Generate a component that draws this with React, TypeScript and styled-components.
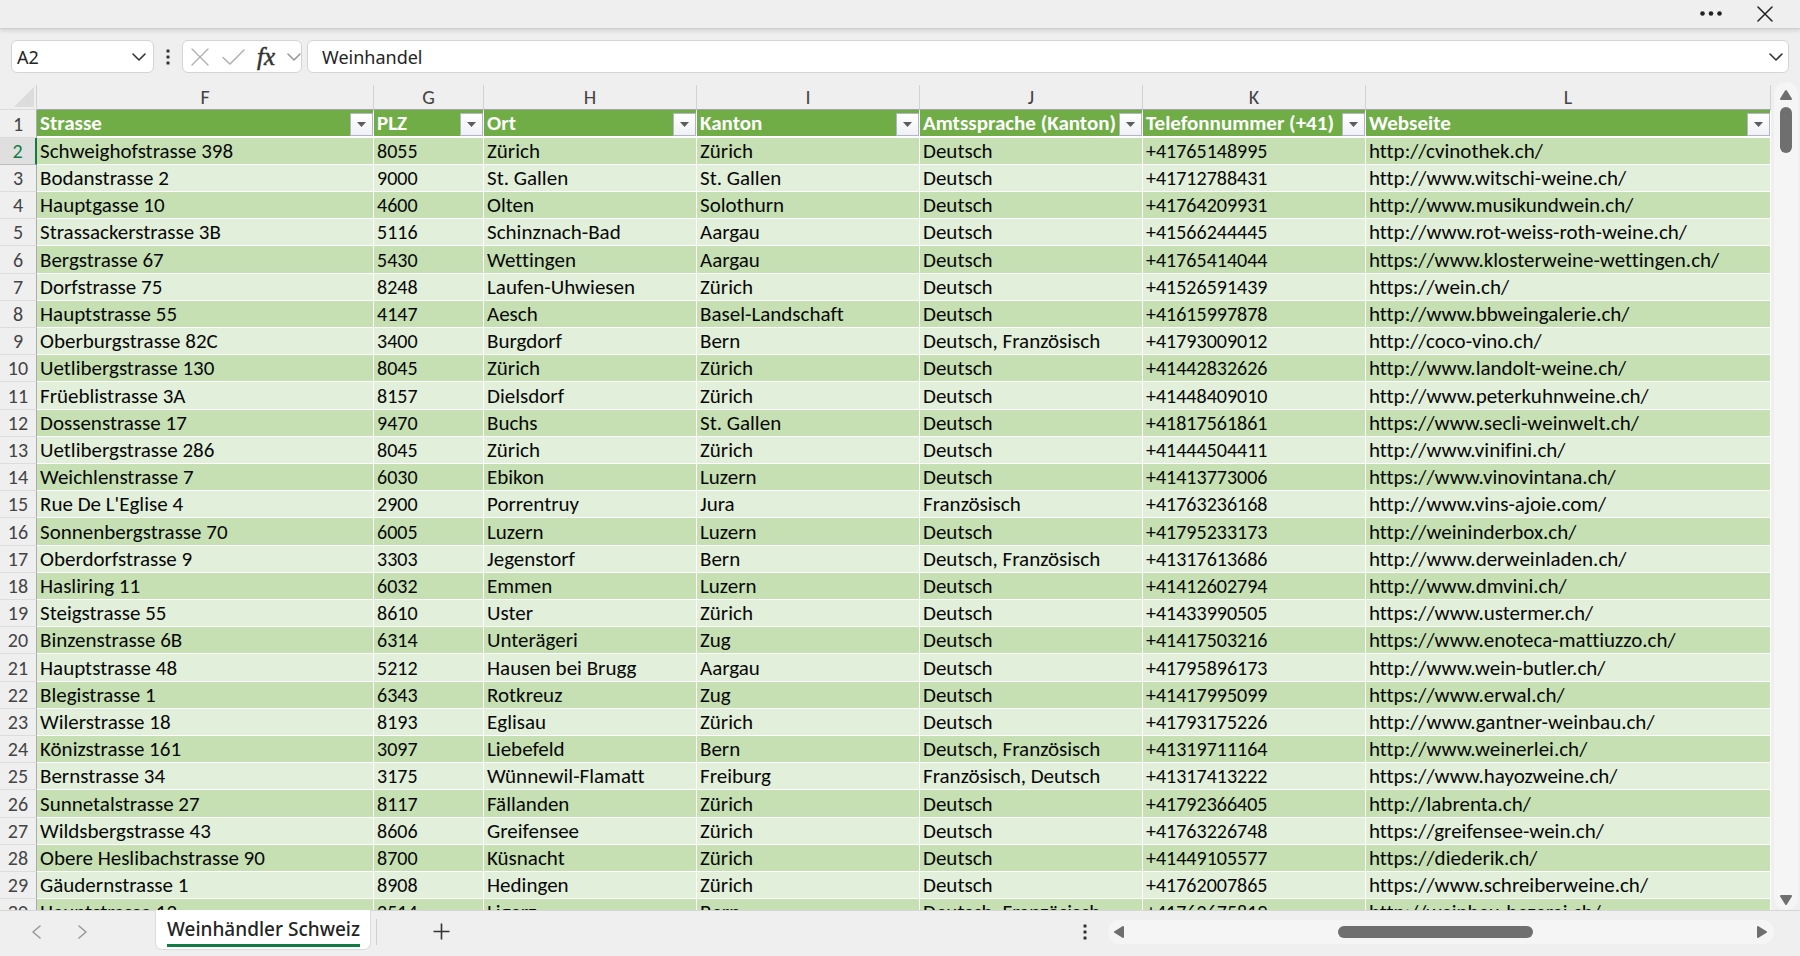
import React from "react";
import styled, { createGlobalStyle, css } from "styled-components";

const GlobalStyle = createGlobalStyle`
  * { box-sizing: border-box; }
  body { margin: 0; background: #efefef; }
  button { border: 0; padding: 0; background: none; font: inherit; color: inherit; }
`;

const uiFont = '"Noto Sans", "Open Sans", sans-serif';
const cellFont = 'Carlito, Lato, sans-serif';

const Window = styled.div`
  display: flex;
  flex-direction: column;
  height: 100vh;
  overflow: hidden;
  background: #efefef;
  font-family: ${uiFont};
  color: #242424;
`;

const TitleBar = styled.header`
  display: flex;
  flex: none;
  justify-content: flex-end;
  align-items: center;
  gap: 34px;
  height: 29px;
  padding-right: 26px;
  border-bottom: 1px solid #cfcfcf;
  box-shadow: 0 1px 5px rgba(0, 0, 0, 0.16);
`;

const IconButton = styled.button<{ $color?: string }>`
  display: flex;
  flex: none;
  align-items: center;
  justify-content: center;
  color: ${(p) => p.$color ?? "#333"};
  svg { display: block; }
`;

const FormulaBar = styled.div`
  display: flex;
  flex: none;
  align-items: center;
  gap: 5px;
  padding: 11px 11px 12px;
`;

const Field = styled.div<{ $width?: number }>`
  display: flex;
  flex: ${(p) => (p.$width ? "none" : "1")};
  width: ${(p) => (p.$width ? `${p.$width}px` : "auto")};
  height: 33px;
  align-items: center;
  border: 1px solid #d4d4d4;
  border-radius: 6px;
  background: #fff;
`;

const TextInput = styled.input<{ $indent: number }>`
  flex: 1;
  min-width: 0;
  height: 28px;
  padding: 0 0 0 ${(p) => p.$indent}px;
  border: 0;
  outline: 0;
  background: transparent;
  color: #242424;
  font-family: ${uiFont};
  font-size: 18px;
`;

const NameField = styled(Field)`padding-right: 7px;`;
const ToolsField = styled(Field)`
  gap: 12px;
  padding: 0 2px 0 8px;
`;
const ValueField = styled(Field)`padding-right: 5px;`;

const FxButton = styled(IconButton)`
  flex: 1;
  font-family: "Liberation Serif", serif;
  font-size: 25px;
  font-style: italic;
  line-height: 28px;
  -webkit-text-stroke: 0.5px currentColor;
`;

const SheetArea = styled.main`
  display: flex;
  flex: 1;
  min-height: 0;
`;

const GridView = styled.div`
  flex: 1;
  min-width: 0;
  overflow: hidden;
`;

const Grid = styled.table`
  width: 100%;
  table-layout: fixed;
  border-collapse: separate;
  border-spacing: 0;
  font-family: ${cellFont};
  font-size: 20px;
  font-variant-ligatures: none;
  line-height: 24px;
  color: #080808;
`;

const Column = styled.col<{ $width?: number }>`
  width: ${(p) => (p.$width ? `${p.$width}px` : "auto")};
`;

const ColumnLetter = styled.th`
  height: 25px;
  padding: 0;
  border-right: 1px solid #d2d2d2;
  border-bottom: 1px solid #a3a3b0;
  color: #444;
  font-weight: 400;
  line-height: 22px;
`;

const Corner = styled(ColumnLetter)`
  border-bottom-color: #dadada;
  svg { display: block; margin-left: auto; margin-right: 2px; }
`;

const RowNumber = styled.th<{ $active?: boolean }>`
  padding: 0;
  border-right: 1px solid #ababab;
  border-bottom: 1px solid #dcdcdc;
  color: #444;
  font-weight: 400;
  ${(p) => p.$active && css`
    border-right: 2px solid #107c41;
    border-bottom-color: #bdbdbd;
    background: #dfdfdf;
    color: #107c41;
  `}
`;

const HeadCell = styled.th`
  height: 28px;
  padding: 0;
  border-right: 1px solid #fff;
  border-bottom: 2px solid #fff;
  background: #70ad47;
  color: #fff;
  font-size: 21px;
  text-align: left;
`;

const HeadContent = styled.div`
  display: flex;
  align-items: center;
  justify-content: space-between;
  height: 26px;
  padding-left: 3px;
  white-space: nowrap;
`;

const FilterButton = styled(IconButton)`
  align-self: flex-end;
  width: 23px;
  height: 23px;
  border: 1px solid #b4b4c4;
  background: linear-gradient(#fff, #f0f1f6);
`;

const BodyRow = styled.tr`
  height: 27px;
  background: #e2efda;
  &:nth-child(odd) { background: #c6e0b4; }
  &:nth-child(5n) { height: 28px; }
`;

const Cell = styled.td<{ $numeric: boolean }>`
  padding: 0 0 0 3px;
  border-right: 1px solid #fff;
  border-bottom: 1px solid #fff;
  font-size: ${(p) => (p.$numeric ? 20 : 21)}px;
  white-space: nowrap;
  overflow: hidden;
`;

const BodyNumber = styled(RowNumber)`
  background: ${(p) => (p.$active ? "#dfdfdf" : "#efefef")};
`;

const VerticalScroll = styled.div`
  display: flex;
  flex: none;
  flex-direction: column;
  align-items: center;
  width: 24px;
  margin: -3px 2px 0 3px;
  padding: 7px 0 4px;
  border-radius: 12px;
  background: #f5f5f5;
`;

const VerticalThumb = styled.div`
  width: 12px;
  height: 46px;
  margin-top: 6px;
  margin-bottom: auto;
  border-radius: 6px;
  background: #6f6f6f;
`;

const BottomBar = styled.footer`
  display: flex;
  flex: none;
  height: 46px;
  border-top: 1px solid #d6d6d6;
  background: #efefef;
`;

const TabArrows = styled.div`
  display: flex;
  align-items: center;
  gap: 36px;
  width: 155px;
  padding: 0 0 4px 32px;
`;

const SheetTab = styled.button`
  height: 40px;
  margin-top: -1px;
  padding: 3px 10px 0 11px;
  border: solid #dcdcdc;
  border-width: 0 1px 1px;
  border-radius: 0 0 7px 7px;
  background: #fff;
  font-size: 19px;
  font-weight: 500;
  line-height: 28px;
`;

const TabLabel = styled.span`
  display: block;
  padding-bottom: 1px;
  border-bottom: 3px solid #107c41;
`;

const TabDivider = styled.div`
  width: 1px;
  height: 26px;
  margin: 8px 0 0 5px;
  background: #cfcfcf;
`;

const AddTab = styled(IconButton)`
  margin: 0 auto 4px 56px;
`;

const HorizontalArea = styled.div`
  display: flex;
  align-items: center;
  gap: 21px;
  width: 40%;
  padding: 0 26px 4px 3px;
`;

const HorizontalScroll = styled.div`
  display: flex;
  flex: 1;
  align-items: center;
  height: 24px;
  padding: 0 6px 0 5px;
  border-radius: 12px;
  background: #f5f5f5;
`;

const HorizontalThumb = styled.div`
  width: 195px;
  height: 12px;
  margin: 0 34% 0 auto;
  border-radius: 6px;
  background: #6f6f6f;
`;

const columns = [
  { letter: "F", title: "Strasse", width: 337 },
  { letter: "G", title: "PLZ", width: 110, numeric: true },
  { letter: "H", title: "Ort", width: 213 },
  { letter: "I", title: "Kanton", width: 223 },
  { letter: "J", title: "Amtssprache (Kanton)", width: 223 },
  { letter: "K", title: "Telefonnummer (+41)", width: 223, numeric: true },
  { letter: "L", title: "Webseite" },
];

const D = "Deutsch";
const DF = "Deutsch, Französisch";

const rows = [
  ["Schweighofstrasse 398", "8055", "Zürich", "Zürich", D, "+41765148995", "http://cvinothek.ch/"],
  ["Bodanstrasse 2", "9000", "St. Gallen", "St. Gallen", D, "+41712788431", "http://www.witschi-weine.ch/"],
  ["Hauptgasse 10", "4600", "Olten", "Solothurn", D, "+41764209931", "http://www.musikundwein.ch/"],
  ["Strassackerstrasse 3B", "5116", "Schinznach-Bad", "Aargau", D, "+41566244445", "http://www.rot-weiss-roth-weine.ch/"],
  ["Bergstrasse 67", "5430", "Wettingen", "Aargau", D, "+41765414044", "https://www.klosterweine-wettingen.ch/"],
  ["Dorfstrasse 75", "8248", "Laufen-Uhwiesen", "Zürich", D, "+41526591439", "https://wein.ch/"],
  ["Hauptstrasse 55", "4147", "Aesch", "Basel-Landschaft", D, "+41615997878", "http://www.bbweingalerie.ch/"],
  ["Oberburgstrasse 82C", "3400", "Burgdorf", "Bern", DF, "+41793009012", "http://coco-vino.ch/"],
  ["Uetlibergstrasse 130", "8045", "Zürich", "Zürich", D, "+41442832626", "http://www.landolt-weine.ch/"],
  ["Früeblistrasse 3A", "8157", "Dielsdorf", "Zürich", D, "+41448409010", "http://www.peterkuhnweine.ch/"],
  ["Dossenstrasse 17", "9470", "Buchs", "St. Gallen", D, "+41817561861", "https://www.secli-weinwelt.ch/"],
  ["Uetlibergstrasse 286", "8045", "Zürich", "Zürich", D, "+41444504411", "http://www.vinifini.ch/"],
  ["Weichlenstrasse 7", "6030", "Ebikon", "Luzern", D, "+41413773006", "https://www.vinovintana.ch/"],
  ["Rue De L'Eglise 4", "2900", "Porrentruy", "Jura", "Französisch", "+41763236168", "http://www.vins-ajoie.com/"],
  ["Sonnenbergstrasse 70", "6005", "Luzern", "Luzern", D, "+41795233173", "http://weininderbox.ch/"],
  ["Oberdorfstrasse 9", "3303", "Jegenstorf", "Bern", DF, "+41317613686", "http://www.derweinladen.ch/"],
  ["Hasliring 11", "6032", "Emmen", "Luzern", D, "+41412602794", "http://www.dmvini.ch/"],
  ["Steigstrasse 55", "8610", "Uster", "Zürich", D, "+41433990505", "https://www.ustermer.ch/"],
  ["Binzenstrasse 6B", "6314", "Unterägeri", "Zug", D, "+41417503216", "https://www.enoteca-mattiuzzo.ch/"],
  ["Hauptstrasse 48", "5212", "Hausen bei Brugg", "Aargau", D, "+41795896173", "http://www.wein-butler.ch/"],
  ["Blegistrasse 1", "6343", "Rotkreuz", "Zug", D, "+41417995099", "https://www.erwal.ch/"],
  ["Wilerstrasse 18", "8193", "Eglisau", "Zürich", D, "+41793175226", "http://www.gantner-weinbau.ch/"],
  ["Könizstrasse 161", "3097", "Liebefeld", "Bern", DF, "+41319711164", "http://www.weinerlei.ch/"],
  ["Bernstrasse 34", "3175", "Wünnewil-Flamatt", "Freiburg", "Französisch, Deutsch", "+41317413222", "https://www.hayozweine.ch/"],
  ["Sunnetalstrasse 27", "8117", "Fällanden", "Zürich", D, "+41792366405", "http://labrenta.ch/"],
  ["Wildsbergstrasse 43", "8606", "Greifensee", "Zürich", D, "+41763226748", "https://greifensee-wein.ch/"],
  ["Obere Heslibachstrasse 90", "8700", "Küsnacht", "Zürich", D, "+41449105577", "https://diederik.ch/"],
  ["Gäudernstrasse 1", "8908", "Hedingen", "Zürich", D, "+41762007865", "https://www.schreiberweine.ch/"],
  ["Hauptstrasse 12", "2514", "Ligerz", "Bern", DF, "+41762675819", "http://weinbau-bezerai.ch/"],
];

const Chevron = ({ width = 14, height = 8, points = "1,1 7,7 13,1" }) => (
  <svg width={width} height={height} fill="none" stroke="currentColor" strokeWidth="1.6" strokeLinecap="round" strokeLinejoin="round">
    <polyline points={points} />
  </svg>
);

const Kebab = () => (
  <svg width="4" height="16" fill="currentColor">
    <rect x="0.5" y="0.5" width="3" height="3" rx="0.6" />
    <rect x="0.5" y="6.5" width="3" height="3" rx="0.6" />
    <rect x="0.5" y="12.5" width="3" height="3" rx="0.6" />
  </svg>
);

const ScrollArrow = ({ turn = 0 }) => (
  <svg width="12" height="12" viewBox="0 0 12 12" fill="#6f6f6f" stroke="#6f6f6f" strokeWidth="2" strokeLinejoin="round">
    <path d="M6 2 L11 10 H1 Z" transform={`rotate(${turn} 6 6)`} />
  </svg>
);

const KebabButton = styled(IconButton)`
  width: 18px;
`;

export default function App() {
  return (
    <Window>
      <GlobalStyle />
      <TitleBar>
        <IconButton aria-label="Weitere Optionen">
          <svg width="22" height="6" fill="#222">
            <circle cx="2.5" cy="2.5" r="2.3" />
            <circle cx="11" cy="2.5" r="2.3" />
            <circle cx="19.5" cy="2.5" r="2.3" />
          </svg>
        </IconButton>
        <IconButton aria-label="Schliessen">
          <svg width="18" height="16" viewBox="0 0 18 16" stroke="#222" strokeWidth="1.5" strokeLinecap="round">
            <path d="M2 1 L16 15 M16 1 L2 15" />
          </svg>
        </IconButton>
      </TitleBar>

      <FormulaBar>
        <NameField $width={143}>
          <TextInput $indent={5} aria-label="Namenfeld" defaultValue="A2" />
          <IconButton aria-label="Namen anzeigen"><Chevron /></IconButton>
        </NameField>
        <KebabButton aria-label="Grösse ändern"><Kebab /></KebabButton>
        <ToolsField $width={120}>
          <IconButton $color="#b0b0b0" aria-label="Abbrechen">
            <svg width="18" height="18" stroke="currentColor" strokeWidth="1.4" strokeLinecap="round">
              <path d="M1 1 L17 17 M17 1 L1 17" />
            </svg>
          </IconButton>
          <IconButton $color="#b0b0b0" aria-label="Eingeben">
            <svg width="24" height="16" fill="none" stroke="currentColor" strokeWidth="1.5" strokeLinecap="round">
              <path d="M2 8.5 L9 15 L23 1" />
            </svg>
          </IconButton>
          <FxButton aria-label="Funktion einfügen">fx</FxButton>
          <IconButton $color="#999" aria-label="Funktionen"><Chevron /></IconButton>
        </ToolsField>
        <ValueField>
          <TextInput $indent={14} aria-label="Bearbeitungsleiste" defaultValue="Weinhandel" />
          <IconButton aria-label="Bearbeitungsleiste erweitern"><Chevron /></IconButton>
        </ValueField>
      </FormulaBar>

      <SheetArea>
        <GridView>
          <Grid>
            <colgroup>
              <Column $width={37} />
              {columns.map((c) => <Column key={c.letter} $width={c.width} />)}
            </colgroup>
            <thead>
              <tr>
                <Corner aria-label="Alles auswählen">
                  <svg width="20" height="20" fill="#dcdcdc"><path d="M20 0 V20 H0 Z" /></svg>
                </Corner>
                {columns.map((c) => <ColumnLetter key={c.letter} scope="col">{c.letter}</ColumnLetter>)}
              </tr>
              <tr>
                <RowNumber scope="row">1</RowNumber>
                {columns.map((c) => (
                  <HeadCell key={c.letter} scope="col">
                    <HeadContent>
                      {c.title}
                      <FilterButton aria-label={`${c.title} filtern`}>
                        <svg width="9" height="5" fill="#5c5c5c"><path d="M0 0 H9 L4.5 5 Z" /></svg>
                      </FilterButton>
                    </HeadContent>
                  </HeadCell>
                ))}
              </tr>
            </thead>
            <tbody>
              {rows.map((row, r) => (
                <BodyRow key={r}>
                  <BodyNumber scope="row" $active={r === 0}>{r + 2}</BodyNumber>
                  {row.map((value, c) => (
                    <Cell key={c} $numeric={Boolean(columns[c].numeric)}>{value}</Cell>
                  ))}
                </BodyRow>
              ))}
            </tbody>
          </Grid>
        </GridView>
        <VerticalScroll>
          <IconButton aria-label="Nach oben"><ScrollArrow /></IconButton>
          <VerticalThumb />
          <IconButton aria-label="Nach unten"><ScrollArrow turn={180} /></IconButton>
        </VerticalScroll>
      </SheetArea>

      <BottomBar>
        <TabArrows>
          <IconButton $color="#999" aria-label="Vorheriges Blatt"><Chevron width={10} height={14} points="8,1 1,7 8,13" /></IconButton>
          <IconButton $color="#999" aria-label="Nächstes Blatt"><Chevron width={10} height={14} points="1,1 8,7 1,13" /></IconButton>
        </TabArrows>
        <SheetTab><TabLabel>Weinhändler Schweiz</TabLabel></SheetTab>
        <TabDivider />
        <AddTab aria-label="Neues Blatt">
          <svg width="17" height="17" stroke="currentColor" strokeWidth="1.6"><path d="M8.5 0.5 V16.5 M0.5 8.5 H16.5" /></svg>
        </AddTab>
        <HorizontalArea>
          <IconButton aria-label="Registerleiste anpassen"><Kebab /></IconButton>
          <HorizontalScroll>
            <IconButton aria-label="Nach links"><ScrollArrow turn={270} /></IconButton>
            <HorizontalThumb />
            <IconButton aria-label="Nach rechts"><ScrollArrow turn={90} /></IconButton>
          </HorizontalScroll>
        </HorizontalArea>
      </BottomBar>
    </Window>
  );
}
